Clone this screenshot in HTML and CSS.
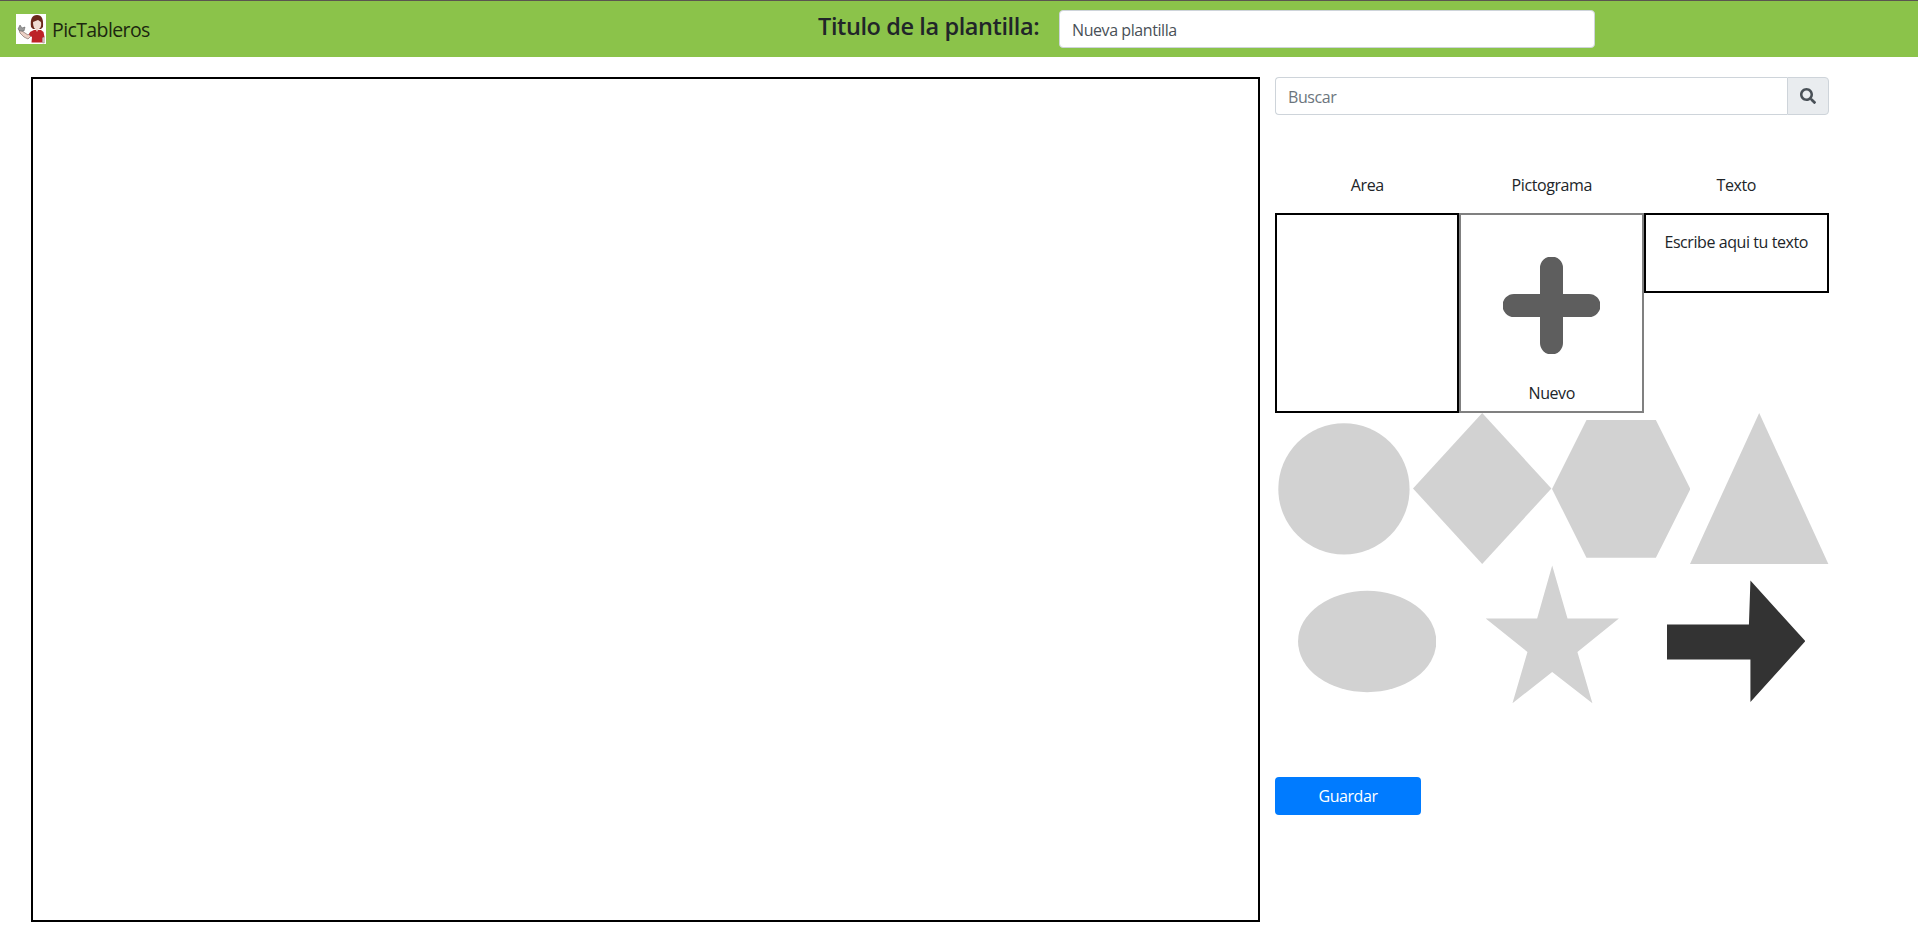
FILE: index.html
```html
<!DOCTYPE html>
<html lang="es">
<head>
<meta charset="utf-8">
<title>PicTableros</title>
<link rel="stylesheet" href="styles.css">
</head>
<body>
<header class="navbar">
  <a class="brand">
    <svg class="logo" viewBox="0 0 30 30">
      <rect width="30" height="30" fill="#fff"/>
      <path d="M3 16L6 17L12 21L15 18L16 21L12 25L8 23L4 19Z" fill="#ecd0c5" stroke="#6e5c58" stroke-width=".6"/>
      <path d="M2 15L4 11L6 14L9 13L8 17L4 17Z" fill="#999" stroke="#555" stroke-width=".5"/>
      <path d="M14 18L18 16H25L27.500 18L28.500 23L26.500 24V28.500H15.500L16 23L13 21Z" fill="#bd2228"/>
      <path d="M15 13C14 5 16 1 21 1C26 1 27.500 5 27 13L25 15H17Z" fill="#6a281c"/>
      <path d="M17 8L22 6L25 8C26 13 23.500 15.500 21 15.500C18.500 15.500 17 13 17 8Z" fill="#f0dcd4"/>
      <path d="M19.500 15H22.500L21 18Z" fill="#ecd0c5"/>
      <path d="M26.700 23.500L28.300 23V29H26.700Z" fill="#ecd0c5" stroke="#6e5c58" stroke-width=".4"/>
    </svg>
    <span class="brand-name">PicTableros</span>
  </a>
  <h4 class="title">Titulo de la plantilla:</h4>
  <div class="field title-field"><span class="value">Nueva plantilla</span></div>
</header>
<main class="layout">
  <section class="board"></section>
  <aside class="panel">
    <div class="search">
      <div class="field search-field"><span class="placeholder">Buscar</span></div>
      <div class="addon">
        <svg class="search-icon" viewBox="0 0 512 512"><path fill="#495057" d="M505 442.700L405.300 343c-4.500-4.500-10.600-7-17-7H372c27.600-35.300 44-79.700 44-128C416 93.100 322.900 0 208 0S0 93.100 0 208s93.100 208 208 208c48.300 0 92.700-16.400 128-44v16.300c0 6.400 2.500 12.500 7 17l99.700 99.700c9.400 9.400 24.600 9.400 33.900 0l28.300-28.300c9.400-9.400 9.400-24.600.1-34zM208 336c-70.700 0-128-57.200-128-128 0-70.700 57.200-128 128-128 70.700 0 128 57.200 128 128 0 70.700-57.200 128-128 128z"/></svg>
      </div>
    </div>
    <div class="labels">
      <span class="t-area">Area</span><span class="t-picto">Pictograma</span><span class="t-texto">Texto</span>
    </div>
    <div class="tools">
      <div class="tool area"></div>
      <div class="tool picto">
        <svg class="plus" viewBox="0 0 97 97"><path fill="#5e5e5e" d="M37 37V11A11.500 11.500 0 0 1 60 11V37H86A11.350 11.350 0 0 1 86 60H60V86A11.500 11.500 0 0 1 37 86V60H11A11.350 11.350 0 0 1 11 37Z"/></svg>
        <span class="t-nuevo">Nuevo</span>
      </div>
      <div class="tool texto"><span class="t-escribe">Escribe aqui tu texto</span></div>
    </div>
    <div class="shapes four">
      <svg viewBox="0 0 138.5 152"><circle cx="69" cy="75.900" r="65.700"/></svg>
      <svg viewBox="0 0 138.5 152"><path d="M69.250 0L138.500 75.500L69.250 151L0 75.500Z"/></svg>
      <svg viewBox="0 0 138.5 152"><path d="M34.500 7H104L138.500 76L104 144.700H34.500L0 76Z"/></svg>
      <svg viewBox="0 0 138.5 152"><path d="M69.250 0L138.500 151H0Z"/></svg>
    </div>
    <div class="shapes three">
      <svg viewBox="0 0 138.5 152"><ellipse cx="69.250" cy="76.500" rx="69.200" ry="50.700"/></svg>
      <svg viewBox="0 0 138.5 152"><path d="M69.250 0.500L84.600 53.500H136L94.500 87L109.500 138.300L69.250 107L29.500 138.300L44.500 87L2.700 53.500H54.200Z"/></svg>
      <svg viewBox="0 0 138.5 152"><path fill="#333" d="M0 59.500H82L83.500 15.500L138.500 76.200L83.500 137V94.500H0Z"/></svg>
    </div>
    <button class="save"><span class="t-guardar">Guardar</span></button>
  </aside>
</main>
</body>
</html>
```
FILE: styles.css
```css
* { box-sizing: border-box; }
body { margin: 0; height: 935px; overflow: hidden; background: #fff; color: #212529; font: 16px/24px "Open Sans", "Noto Sans", sans-serif; }
svg { display: block; }
.navbar { display: flex; height: 57px; border-top: 1px solid #5b5550; background: #8bc34a; padding-left: 16px; }
.brand { display: flex; align-items: center; gap: 6px; width: 802px; height: 56px; font-size: 19.5px; color: #1c270f; }
.brand-name { padding-top: 2px; letter-spacing: -0.6px; }
.logo { width: 30px; height: 30px; }
.title { margin: 11px 0 0; width: 241px; font-size: 23.5px; line-height: 29px; font-weight: 600; letter-spacing: -0.4px; white-space: nowrap; }
.field { height: 38px; border: 1px solid #ced4da; border-radius: 4px; background: #fff; padding: 7px 12px; color: #495057; }
.title-field { width: 536px; margin-top: 9px; }
.layout { display: flex; gap: 15px; padding: 20px 0 0 31px; }
.board { width: 1229px; height: 845px; border: 2px solid #000; }
.panel { width: 553.5px; }
.search { display: flex; }
.search-field { flex: 1; border-radius: 4px 0 0 4px; border-right: 0; }
.placeholder { color: #6c757d; }
.addon { display: flex; align-items: center; justify-content: center; width: 42px; height: 38px; border: 1px solid #ced4da; border-radius: 0 4px 4px 0; background: #e9ecef; }
.search-icon { width: 16px; height: 16px; }
.labels { display: grid; grid-template-columns: repeat(3, 1fr); margin-top: 58px; height: 40px; text-align: center; }
.tools { display: grid; grid-template-columns: 184.4px 184.6px 1fr; align-items: start; height: 200px; }
.tool { display: flex; flex-direction: column; align-items: center; border: 2px solid #000; height: 200px; }
.picto { border-color: #808080; padding-top: 42px; }
.plus { width: 97px; height: 97px; margin-bottom: 27px; }
.texto { height: 80px; padding-top: 15px; white-space: nowrap; }
.shapes { display: flex; height: 152px; fill: #d2d2d2; }
.shapes svg { flex: none; width: 138.375px; height: 152px; }
.three { justify-content: space-around; }
.save { display: flex; align-items: center; justify-content: center; width: 146px; height: 38px; margin-top: 60px; border: 0; border-radius: 4px; background: #007bff; color: #fff; font: inherit; }
.value, .placeholder, .labels, .t-nuevo, .t-escribe, .t-guardar { letter-spacing: -0.42px; }
```
